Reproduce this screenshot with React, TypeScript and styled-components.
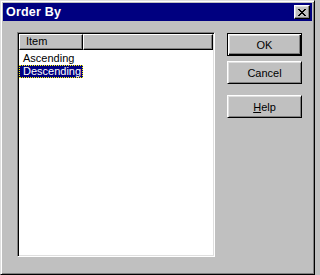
import React from "react";
import styled, {createGlobalStyle} from "styled-components";

const GlobalStyle = createGlobalStyle`
  html, body {
    margin: 0;
    padding: 0;
    background: #c0c0c0;
  }
  * {
    box-sizing: border-box;
  }
`;

const Window = styled.div`
  width: 315px;
  height: 275px;
  display: flex;
  flex-direction: column;
  background: #c0c0c0;
  border: 1px solid;
  border-color: #dfdfdf #000 #000 #dfdfdf;
  box-shadow: inset 1px 1px #fff, inset -1px -1px #808080;
  padding: 2px;
  font-family: "Liberation Sans", Arial, sans-serif;
  font-size: 11px;
  color: #000;
`;

const TitleBar = styled.div`
  height: 18px;
  background: #000080;
  display: flex;
  align-items: center;
  justify-content: space-between;
  padding: 0 2px 0 3px;
`;

const TitleText = styled.span`
  color: #fff;
  font-weight: bold;
  font-size: 12.5px;
  letter-spacing: 0.2px;
`;

const CloseButton = styled.div`
  width: 16px;
  height: 14px;
  background: #c0c0c0;
  border: 1px solid;
  border-color: #fff #000 #000 #fff;
  box-shadow: inset -1px -1px #808080, inset 1px 1px #dfdfdf;
  display: flex;
  align-items: center;
  justify-content: center;
`;

const Content = styled.div`
  flex: 1;
  display: flex;
  gap: 12px;
  padding: 11px 10px 15px 14px;
`;

const ListBox = styled.div`
  width: 198px;
  background: #fff;
  border: 1px solid;
  border-color: #808080 #fff #fff #808080;
  box-shadow: inset 1px 1px #000, inset -1px -1px #dfdfdf;
  padding: 1px;
  display: flex;
  flex-direction: column;
`;

const HeaderRow = styled.div`
  display: flex;
  height: 16px;
`;

const HeaderCell = styled.div<{$width?: number}>`
  ${(p) => (p.$width ? `width: ${p.$width}px;` : "flex: 1;")}
  background: #c0c0c0;
  border: 1px solid;
  border-color: #fff #000 #000 #fff;
  box-shadow: inset -1px -1px #808080;
  padding: 0 6px;
  line-height: 13px;
`;

const Rows = styled.div`
  padding-top: 2px;
`;

const Row = styled.div<{$selected?: boolean}>`
  width: 64px;
  height: 13px;
  line-height: 11px;
  padding: 0 3px;
  white-space: nowrap;
  border: 1px ${(p) => (p.$selected ? "dotted #ffff00" : "solid transparent")};
  background: ${(p) => (p.$selected ? "#000080" : "transparent")};
  color: ${(p) => (p.$selected ? "#fff" : "#000")};
`;

const ButtonColumn = styled.div`
  width: 75px;
  display: flex;
  flex-direction: column;
  padding-top: 1px;
`;

const Button = styled.div<{$default?: boolean; $gap?: number}>`
  height: 23px;
  margin-top: ${(p) => p.$gap ?? 0}px;
  display: flex;
  align-items: center;
  justify-content: center;
  background: #c0c0c0;
  border: 1px solid #000;
  box-shadow: ${(p) =>
    p.$default
      ? "inset 1px 1px #fff, inset -1px -1px #000, inset -2px -2px #808080, inset 2px 2px #dfdfdf"
      : "inset 1px 1px #dfdfdf, inset -1px -1px #808080"};
  border-color: ${(p) => (p.$default ? "#000" : "#fff #000 #000 #fff")};
  font-size: 11px;
`;

export default function App() {
  return (
    <>
      <GlobalStyle />
      <Window>
        <TitleBar>
          <TitleText>Order By</TitleText>
          <CloseButton>
            <svg width="8" height="7" viewBox="0 0 8 7" shapeRendering="crispEdges">
              <path
                d="M0 0h2v1h-2zM6 0h2v1h-2zM1 1h2v1h-2zM5 1h2v1h-2zM2 2h4v1h-4zM3 3h2v1h-2zM2 4h4v1h-4zM1 5h2v1h-2zM5 5h2v1h-2zM0 6h2v1h-2zM6 6h2v1h-2z"
                fill="#000"
              />
            </svg>
          </CloseButton>
        </TitleBar>
        <Content>
          <ListBox>
            <HeaderRow>
              <HeaderCell $width={64}>Item</HeaderCell>
              <HeaderCell />
            </HeaderRow>
            <Rows>
              <Row>Ascending</Row>
              <Row $selected>Descending</Row>
            </Rows>
          </ListBox>
          <ButtonColumn>
            <Button $default>OK</Button>
            <Button $gap={5}>Cancel</Button>
            <Button $gap={11}>
              <span>
                <u>H</u>elp
              </span>
            </Button>
          </ButtonColumn>
        </Content>
      </Window>
    </>
  );
}
